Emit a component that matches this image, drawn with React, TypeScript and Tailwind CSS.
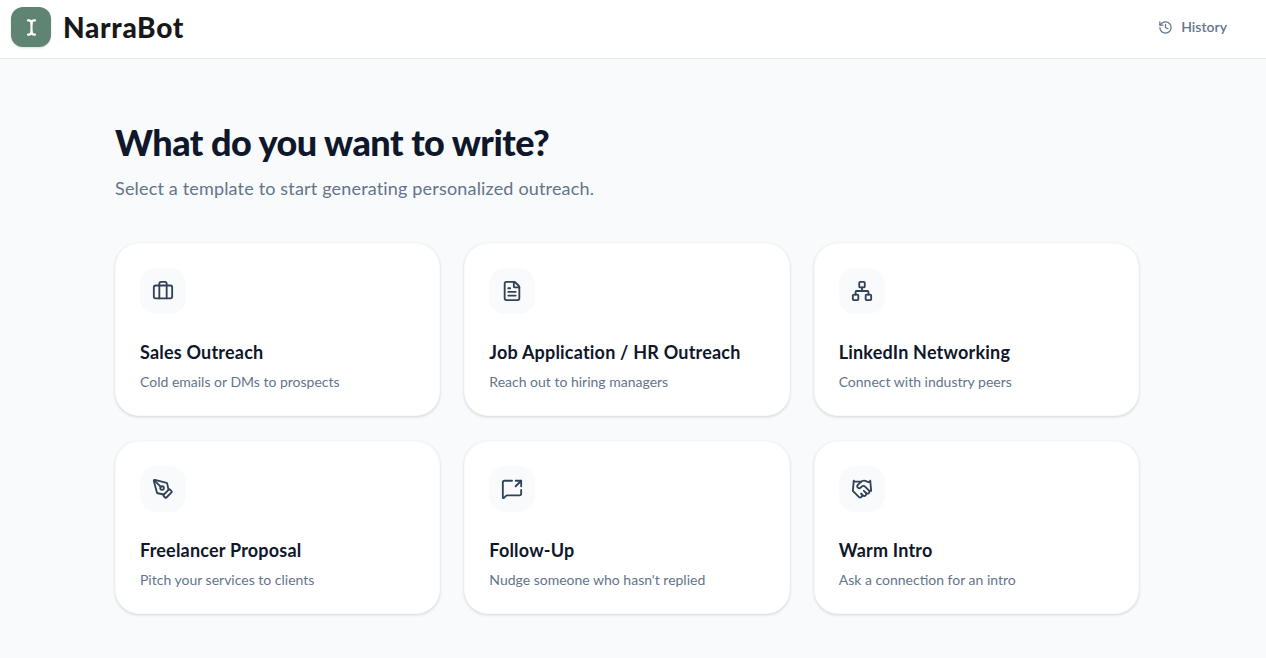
import { Briefcase, FileText, Network, PenTool, MessageSquareShare, Handshake, History, TextCursor } from "lucide-react";

const cards = [
  { icon: Briefcase, title: "Sales Outreach", desc: "Cold emails or DMs to prospects" },
  { icon: FileText, title: "Job Application / HR Outreach", desc: "Reach out to hiring managers" },
  { icon: Network, title: "LinkedIn Networking", desc: "Connect with industry peers" },
  { icon: PenTool, title: "Freelancer Proposal", desc: "Pitch your services to clients" },
  { icon: MessageSquareShare, title: "Follow-Up", desc: "Nudge someone who hasn't replied" },
  { icon: Handshake, title: "Warm Intro", desc: "Ask a connection for an intro" },
];

export default function App() {
  return (
    <div className="h-[658px] overflow-hidden bg-[#f8fafc] font-['Lato',sans-serif]">
      <header className="flex h-[59px] items-start justify-between border-b border-[#e2e8f0] bg-white pl-[11px] pr-[39px]">
        <div className="mt-[7px] flex items-center gap-3">
          <div className="flex h-10 w-10 items-center justify-center rounded-xl bg-[#5f8572] text-white shadow-sm">
            <TextCursor size={17} strokeWidth={3} />
          </div>
          <span className="text-[28px] leading-10 font-black tracking-[0.7px] text-[#18181b]">NarraBot</span>
        </div>
        <div className="mt-[17px] flex items-center gap-2 text-sm font-semibold text-[#64748b]">
          <History size={15} strokeWidth={2} />
          <span>History</span>
        </div>
      </header>
      <main className="w-[1254px]">
        <div className="mx-auto max-w-5xl">
          <h1 className="mt-[58px] text-4xl leading-[50px] font-black tracking-[-0.5px] text-[#0f172a]">What do you want to write?</h1>
          <p className="mt-[7px] text-lg leading-7 tracking-[0.17px] text-[#64748b]">Select a template to start generating personalized outreach.</p>
          <div className="mt-[41px] grid grid-cols-3 gap-x-6 gap-y-[25px]">
            {cards.map(({ icon: Icon, title, desc }) => (
              <div key={title} className="h-[173px] rounded-3xl border border-[#f8fafc] bg-white p-6 shadow-[0_1px_3px_rgba(15,23,42,0.16)]">
                <div className="flex h-[46px] w-[46px] items-center justify-center rounded-2xl bg-[#f8fafc] text-[#334155]">
                  <Icon size={22} strokeWidth={2} />
                </div>
                <h3 className="mt-[24px] text-lg leading-7 font-bold tracking-[0.2px] text-[#0f172a]">{title}</h3>
                <p className="mt-[6px] text-sm leading-5 text-[#64748b]">{desc}</p>
              </div>
            ))}
          </div>
        </div>
      </main>
    </div>
  );
}
